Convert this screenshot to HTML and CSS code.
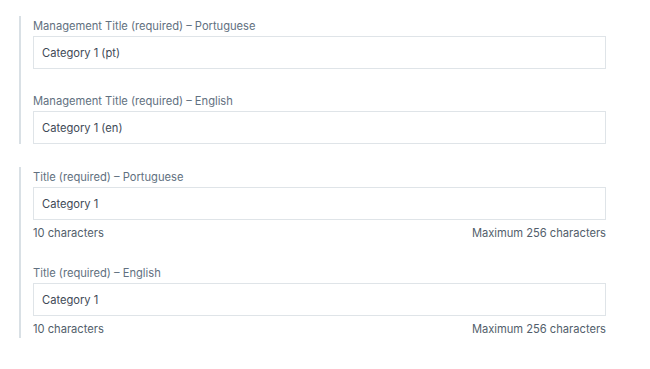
FILE: index.html
```html
<!DOCTYPE html>
<html lang="en">
<head>
<meta charset="utf-8">
<title>Category titles</title>
<link rel="stylesheet" href="styles.css">
</head>
<body>
<div class="page">
  <section class="group">
    <div class="field">
      <label class="label" for="mt-pt">Management Title (required) – Portuguese</label>
      <input class="input" id="mt-pt" type="text" value="Category 1 (pt)">
    </div>
    <div class="field">
      <label class="label" for="mt-en">Management Title (required) – English</label>
      <input class="input" id="mt-en" type="text" value="Category 1 (en)">
    </div>
  </section>
  <section class="group group-counted">
    <div class="field">
      <label class="label" for="t-pt">Title (required) – Portuguese</label>
      <input class="input" id="t-pt" type="text" value="Category 1">
      <div class="helper"><span>10 characters</span><span>Maximum 256 characters</span></div>
    </div>
    <div class="field">
      <label class="label" for="t-en">Title (required) – English</label>
      <input class="input" id="t-en" type="text" value="Category 1">
      <div class="helper"><span>10 characters</span><span>Maximum 256 characters</span></div>
    </div>
  </section>
</div>
</body>
</html>
```
FILE: styles.css
```css
* { box-sizing: border-box; }
html, body { margin: 0; background: #ffffff; }
body {
  font-family: Inter, "Noto Sans", "Liberation Sans", sans-serif;
  font-size: 11.15px;
  color: #5b6876;
}
.page {
  padding: 16px 44px 0 19px;
  display: flex;
  flex-direction: column;
  gap: 23px;
}
.group {
  border-left: 2px solid #d9e0e5;
  padding-left: 12px;
  display: flex;
  flex-direction: column;
  gap: 22px;
}
.group-counted {
  gap: 21px;
}
.field {
  display: flex;
  flex-direction: column;
}
.label {
  display: block;
  line-height: 20px;
  color: #617080;
}
.input {
  display: block;
  width: 100%;
  height: 33px;
  margin: 0;
  padding: 0 8px;
  border: 1px solid #dfe4e8;
  border-radius: 0;
  background: #ffffff;
  font: inherit;
  color: #3e4956;
  outline: none;
}
.helper {
  display: flex;
  justify-content: space-between;
  margin-top: 4px;
  line-height: 18px;
  color: #525e6b;
}
```
